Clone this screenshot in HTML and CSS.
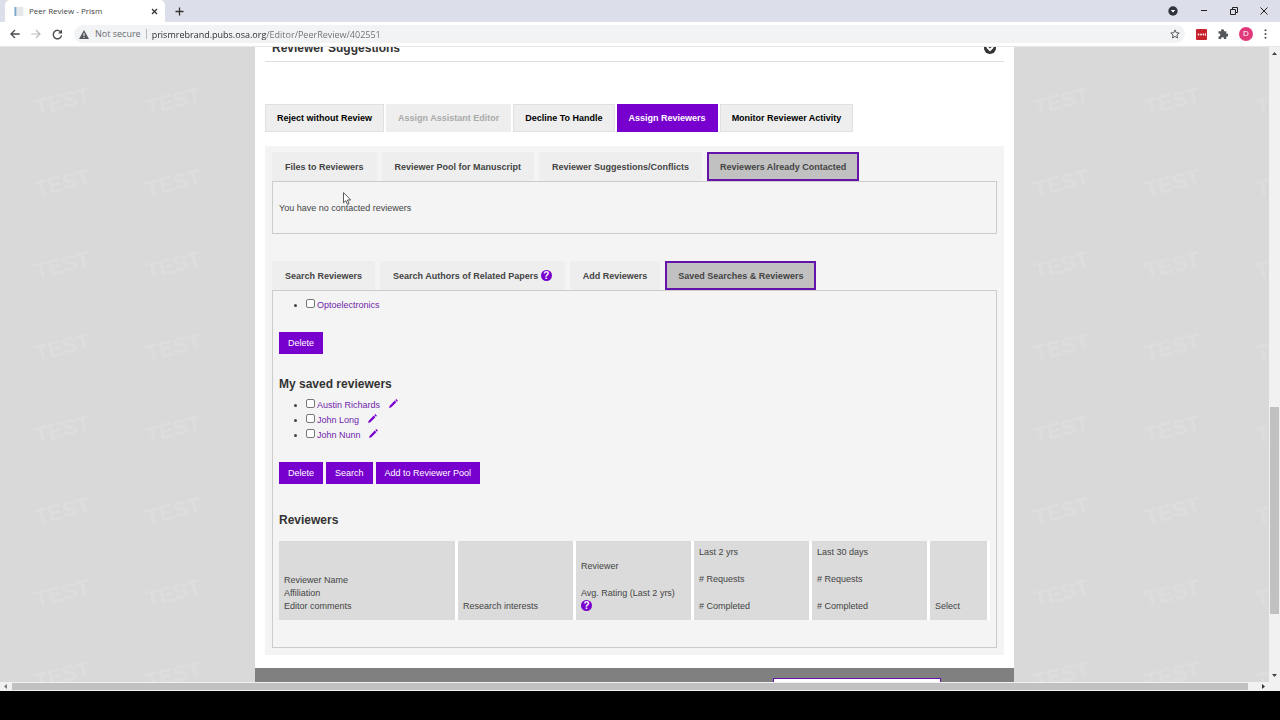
FILE: index.html
```html
<!DOCTYPE html>
<html lang="en">
<head>
    <meta charset="UTF-8">
    <meta name="viewport" content="width=device-width, initial-scale=1.0">
    <title>Peer Review - Prism</title>
    <link rel="stylesheet" href="styles.css">
</head>
<body>
    <div class="tab-strip">
        <div class="browser-tab">
            <svg class="favicon" viewBox="0 0 10 10"><rect width="10" height="10" fill="#e6e9ec"/><rect width="2" height="10" fill="#7ba7c9"/></svg>
            <span class="tab-title">Peer Review - Prism</span>
            <button type="button" class="icon-btn" aria-label="Close tab">
                <svg width="7" height="7" viewBox="0 0 7 7"><path d="M1 1l5 5M6 1L1 6" stroke="#333" stroke-width="1.3"/></svg>
            </button>
        </div>
        <button type="button" class="icon-btn new-tab" aria-label="New tab">
            <svg width="9" height="9" viewBox="0 0 9 9"><path d="M4.5 0.5v8M0.5 4.5h8" stroke="#333" stroke-width="1.3"/></svg>
        </button>
        <div class="window-buttons">
            <button type="button" class="icon-btn" aria-label="Tab search">
                <svg width="10" height="10" viewBox="0 0 10 10"><circle cx="5" cy="5" r="4.7" fill="#30343c"/><path d="M2.8 4h4.4L5 6.6z" fill="#fff"/></svg>
            </button>
            <button type="button" class="icon-btn" aria-label="Minimize">
                <svg width="8" height="8" viewBox="0 0 8 8"><path d="M1 3.5h6" stroke="#222"/></svg>
            </button>
            <button type="button" class="icon-btn" aria-label="Restore">
                <svg width="8" height="8" viewBox="0 0 8 8"><path d="M2.5 2.5v-2h5v5h-2M0.5 2.5h5v5h-5z" fill="none" stroke="#222"/></svg>
            </button>
            <button type="button" class="icon-btn" aria-label="Close">
                <svg width="8" height="8" viewBox="0 0 8 8"><path d="M0.5 0.5l7 7M7.5 0.5l-7 7" stroke="#222"/></svg>
            </button>
        </div>
    </div>

    <div class="toolbar">
        <button type="button" class="icon-btn" aria-label="Back">
            <svg width="10" height="10" viewBox="0 0 10 10"><path d="M9.7 5H1M5 1L1 5l4 4" fill="none" stroke="#4a4d51" stroke-width="1.3"/></svg>
        </button>
        <button type="button" class="icon-btn" aria-label="Forward">
            <svg width="10" height="10" viewBox="0 0 10 10"><path d="M0.3 5H9M5 1l4 4-4 4" fill="none" stroke="#b9bbbe" stroke-width="1.2"/></svg>
        </button>
        <button type="button" class="icon-btn" aria-label="Reload">
            <svg width="11" height="11" viewBox="0 0 11 11"><path d="M9 3.2A4.2 4.2 0 1 0 9.6 6.4" fill="none" stroke="#4a4d51" stroke-width="1.4"/><path d="M10 0.6v4H6z" fill="#4a4d51"/></svg>
        </button>
        <div class="omnibox">
            <svg width="10" height="9" viewBox="0 0 10 9"><path d="M5 0l5 9H0z" fill="#54575b"/><path d="M5 3v3M5 6.8v1.1" stroke="#fff"/></svg>
            <label for="address">Not secure</label>
            <input type="text" id="address" value="prismrebrand.pubs.osa.org/Editor/PeerReview/402551">
            <button type="button" class="icon-btn" aria-label="Bookmark this page">
                <svg width="10" height="10" viewBox="0 0 10 10"><path d="M5 0.9l1.2 2.8 3 .3-2.3 2 .7 3L5 7.4 2.4 9l.7-3L.8 4l3-.3z" fill="none" stroke="#4a4d51" stroke-width=".9"/></svg>
            </button>
        </div>
        <button type="button" class="icon-btn" aria-label="Password manager">
            <svg width="11" height="11" viewBox="0 0 11 11"><rect width="11" height="11" rx="1" fill="#c8232c"/><g fill="#fff"><circle cx="2.5" cy="5.5" r=".9"/><circle cx="5" cy="5.5" r=".9"/><circle cx="7.5" cy="5.5" r=".9"/><rect x="9" y="4" width=".7" height="3"/></g></svg>
        </button>
        <button type="button" class="icon-btn" aria-label="Extensions">
            <svg width="10" height="10" viewBox="0 0 10 10"><path d="M0.5 2.2h2.7a1.4 1.4 0 1 1 2.6 0h2.5v2.6a1.4 1.4 0 1 1 0 2.6V10H5.9a1.4 1.4 0 1 0-2.7 0H0.5V7.4a1.4 1.4 0 1 0 0-2.7z" fill="#54575b"/></svg>
        </button>
        <button type="button" class="avatar" aria-label="Profile">D</button>
        <button type="button" class="icon-btn" aria-label="Menu">
            <svg width="3" height="10" viewBox="0 0 3 10"><g fill="#4a4d51"><circle cx="1.5" cy="1.3" r="1"/><circle cx="1.5" cy="5" r="1"/><circle cx="1.5" cy="8.7" r="1"/></g></svg>
        </button>
    </div>

    <div class="viewport">
        <div class="page">
            <svg class="watermark" width="100%" height="100%" aria-hidden="true">
                <defs>
                    <pattern id="test" width="111" height="82" patternUnits="userSpaceOnUse">
                        <text x="37" y="68" transform="rotate(-14 37 68)">TEST</text>
                    </pattern>
                </defs>
                <rect width="100%" height="100%" fill="url(#test)"/>
            </svg>

            <main class="content">
                <div class="section-header">
                    <h2>Reviewer Suggestions</h2>
                    <svg width="12" height="12" viewBox="0 0 12 12"><circle cx="6" cy="6" r="6" fill="#333"/><path d="M3 5l3 3 3-3" fill="none" stroke="#fff" stroke-width="2"/></svg>
                </div>

                <div class="action-tabs">
                    <button type="button">Reject without Review</button>
                    <button type="button" disabled>Assign Assistant Editor</button>
                    <button type="button">Decline To Handle</button>
                    <button type="button" class="active">Assign Reviewers</button>
                    <button type="button">Monitor Reviewer Activity</button>
                </div>

                <div class="panel">
                    <div class="sub-tabs">
                        <button type="button">Files to Reviewers</button>
                        <button type="button">Reviewer Pool for Manuscript</button>
                        <button type="button">Reviewer Suggestions/Conflicts</button>
                        <button type="button" class="active">Reviewers Already Contacted</button>
                    </div>
                    <div class="tab-body contacted">
                        <p>You have no contacted reviewers</p>
                    </div>

                    <div class="sub-tabs">
                        <button type="button">Search Reviewers</button>
                        <button type="button">Search Authors of Related Papers <span class="help">?</span></button>
                        <button type="button">Add Reviewers</button>
                        <button type="button" class="active">Saved Searches &amp; Reviewers</button>
                    </div>
                    <div class="tab-body saved">
                        <ul class="saved-list">
                            <li><input type="checkbox" id="s1" aria-label="Optoelectronics"><a href="#">Optoelectronics</a></li>
                        </ul>
                        <div class="buttons">
                            <button type="button">Delete</button>
                        </div>

                        <h3>My saved reviewers</h3>
                        <ul class="saved-list">
                            <li><input type="checkbox" id="r1" aria-label="Austin Richards"><a href="#">Austin Richards</a>
                                <a href="#" class="edit" aria-label="Edit Austin Richards"><svg viewBox="0 0 10 10"><path d="M0 10l.8-2.6 5.6-5.6 1.8 1.8-5.6 5.6zM7 1.2L8.1.1 9.9 1.9 8.8 3z"/></svg></a></li>
                            <li><input type="checkbox" id="r2" aria-label="John Long"><a href="#">John Long</a>
                                <a href="#" class="edit" aria-label="Edit John Long"><svg viewBox="0 0 10 10"><path d="M0 10l.8-2.6 5.6-5.6 1.8 1.8-5.6 5.6zM7 1.2L8.1.1 9.9 1.9 8.8 3z"/></svg></a></li>
                            <li><input type="checkbox" id="r3" aria-label="John Nunn"><a href="#">John Nunn</a>
                                <a href="#" class="edit" aria-label="Edit John Nunn"><svg viewBox="0 0 10 10"><path d="M0 10l.8-2.6 5.6-5.6 1.8 1.8-5.6 5.6zM7 1.2L8.1.1 9.9 1.9 8.8 3z"/></svg></a></li>
                        </ul>
                        <div class="buttons">
                            <button type="button">Delete</button>
                            <button type="button">Search</button>
                            <button type="button">Add to Reviewer Pool</button>
                        </div>

                        <h3 class="results-title">Reviewers</h3>
                        <table>
                            <colgroup>
                                <col class="col-name">
                                <col span="4" class="col-data">
                                <col class="col-select">
                            </colgroup>
                            <thead>
                                <tr>
                                    <th>Reviewer Name<br>Affiliation<br>Editor comments</th>
                                    <th>Research interests</th>
                                    <th><p>Reviewer</p>Avg. Rating (Last 2 yrs)<br><span class="help">?</span></th>
                                    <th><p>Last 2 yrs</p><p># Requests</p># Completed</th>
                                    <th><p>Last 30 days</p><p># Requests</p># Completed</th>
                                    <th>Select</th>
                                </tr>
                            </thead>
                        </table>
                    </div>
                </div>

                <footer>
                    <input type="text" aria-label="Search">
                </footer>
            </main>
        </div>
        <div class="scroll-y">
            <svg width="5" height="3" viewBox="0 0 5 3"><path d="M0 3L2.5 0 5 3z" fill="#444"/></svg>
            <div class="track"><div class="thumb"></div></div>
            <svg width="5" height="3" viewBox="0 0 5 3"><path d="M0 0h5L2.5 3z" fill="#444"/></svg>
        </div>
    </div>

    <div class="scroll-x">
        <svg width="3" height="5" viewBox="0 0 3 5"><path d="M3 0v5L0 2.5z" fill="#777"/></svg>
        <div class="thumb"></div>
        <svg width="3" height="5" viewBox="0 0 3 5"><path d="M0 0v5l3-2.5z" fill="#333"/></svg>
    </div>
    <div class="bottom-bar"></div>

    <svg class="cursor" width="9" height="13" viewBox="0 0 9 13"><path d="M.5.6v10.2l2.3-2.2 1.7 3.8 1.6-.7-1.7-3.7h3.3z" fill="#fff" stroke="#333" stroke-width=".8"/></svg>
</body>
</html>
```

FILE: styles.css
```css
* {
    box-sizing: border-box;
}
body {
    margin: 0;
    height: 100vh;
    display: flex;
    flex-direction: column;
    overflow: hidden;
    background-color: #fff;
    font-family: "Liberation Sans", Arial, sans-serif;
    font-size: 9px;
    color: #444;
}
button {
    font-family: inherit;
    font-size: 9px;
    border: none;
    cursor: pointer;
}
svg {
    flex: none;
}
.icon-btn {
    display: flex;
    padding: 0;
    background: none;
}

/* browser chrome */
.tab-strip {
    height: 22px;
    flex: none;
    display: flex;
    align-items: center;
    padding-left: 5px;
    background-color: #dcdfe9;
}
.browser-tab {
    width: 160px;
    height: 22px;
    display: flex;
    align-items: center;
    gap: 5px;
    padding: 0 7px 0 9px;
    background-color: #fff;
    border-radius: 5px 5px 0 0;
}
.favicon {
    width: 10px;
    height: 9px;
}
.tab-title {
    flex: 1;
    font-family: "Open Sans", sans-serif;
    font-size: 8px;
    line-height: 10px;
}
.new-tab {
    margin-left: 10px;
}
.window-buttons {
    margin-left: auto;
    display: flex;
    align-items: center;
    gap: 22px;
    padding-right: 12px;
}
.toolbar {
    height: 25px;
    flex: none;
    display: flex;
    align-items: center;
    gap: 11px;
    padding: 0 13px 0 10px;
    border-bottom: 1px solid #e6e6e6;
}
.omnibox {
    flex: 1;
    height: 18px;
    display: flex;
    align-items: center;
    padding: 0 5px;
    background-color: #f1f3f4;
    border-radius: 9px;
    font-family: "Open Sans", sans-serif;
    font-size: 9px;
}
.omnibox label {
    margin-left: 6px;
    padding-right: 5px;
    border-right: 1px solid #bbb;
    line-height: 10px;
    color: #6b6e72;
}
.omnibox input {
    flex: 1;
    border: none;
    padding: 0 0 0 5px;
    font-family: inherit;
    font-size: 9px;
    color: transparent;
    background: linear-gradient(to right, #26282b 119px, #6b6e72 119px);
    background-clip: text;
}
.avatar {
    width: 14px;
    height: 14px;
    padding: 0;
    border-radius: 50%;
    background-color: #e0397a;
    color: #fff;
    font-size: 8px;
    line-height: 14px;
}

/* page */
.viewport {
    flex: 1;
    min-height: 0;
    display: flex;
}
.page {
    flex: 1;
    position: relative;
    overflow: hidden;
    background-color: #d9d9d9;
}
.watermark {
    position: absolute;
    top: 0;
    left: 0;
}
.watermark text {
    font-size: 22px;
    font-weight: bold;
    fill: #dddddd;
}
.content {
    position: relative;
    max-width: 759px;
    margin: -7px auto 0;
    background-color: #fff;
}
.section-header {
    display: flex;
    align-items: center;
    justify-content: space-between;
    height: 22px;
    margin: 0 10px 42px;
    padding: 0 8px 6px 7px;
    border-bottom: 1px solid #e2dcdf;
}
h2, h3 {
    margin: 0;
    font-size: 12px;
    line-height: 16px;
    color: #333;
}
.action-tabs {
    display: flex;
    gap: 2px;
    margin: 0 10px 14px;
}
.action-tabs button {
    height: 28px;
    padding: 0 11px;
    border: 1px solid #e0e0e0;
    background-color: #eee;
    font-weight: bold;
    color: #000;
}
.action-tabs button:disabled {
    border-color: #eee;
    color: #aaa;
}
.action-tabs .active {
    background-color: #7800ce;
    border-color: #7800ce;
    color: #fff;
}
.panel {
    margin: 0 10px;
    padding: 6px 7px 7px;
    background-color: #f4f4f4;
}
.sub-tabs {
    display: flex;
    gap: 5px;
}
.sub-tabs button {
    height: 29px;
    padding: 0 11px;
    border: 2px solid #eee;
    background-color: #eee;
    font-weight: bold;
    color: #444;
}
.sub-tabs .active {
    border-color: #6414a8;
    background-color: #c1c1c1;
}
.tab-body {
    border: 1px solid #ccc;
    padding: 0 6px;
}
.contacted {
    margin-bottom: 27px;
    padding: 20px 6px 18px;
}
.contacted p {
    margin: 0;
    line-height: 13px;
}
.saved {
    padding: 7px 6px 27px;
}
.saved-list {
    margin: 0 0 19px;
    padding: 0 0 0 27px;
    line-height: 15px;
}
.saved-list input {
    appearance: none;
    width: 9px;
    height: 9px;
    margin: 0 2px 0 0;
    border: 1px solid #777;
    border-radius: 2px;
    background-color: #fff;
}
a {
    color: #7024ac;
    text-decoration: none;
}
.edit {
    margin-left: 6px;
}
.edit svg {
    width: 9px;
    height: 9px;
    fill: #7800ce;
    vertical-align: baseline;
}
.buttons {
    display: flex;
    gap: 3px;
    margin-bottom: 22px;
}
.buttons button {
    height: 22px;
    padding: 0 9px;
    background-color: #7800ce;
    color: #fff;
}
.saved h3 {
    margin-bottom: 6px;
}
.saved .results-title {
    margin: 28px 0 13px;
}
.help {
    display: inline-block;
    width: 11px;
    height: 11px;
    border-radius: 50%;
    background-color: #7800ce;
    color: #fff;
    font-size: 10px;
    font-weight: bold;
    line-height: 11px;
    text-align: center;
}
table {
    width: 100%;
    table-layout: fixed;
    border-collapse: separate;
    border-spacing: 0;
}
.col-name {
    width: 179px;
}
.col-data {
    width: 118px;
}
.col-select {
    width: 60px;
}
th {
    height: 78px;
    padding: 5px 5px 7px;
    border-right: 3px solid #fff;
    background-color: #dbdbdb;
    font-weight: normal;
    line-height: 13px;
    text-align: left;
    vertical-align: bottom;
}
th p {
    margin: 0 0 14px;
}
footer {
    display: flex;
    justify-content: flex-end;
    height: 60px;
    margin-top: 13px;
    padding: 10px 73px 0 0;
    background-color: #808080;
}
footer input {
    width: 168px;
    height: 24px;
    border: 1px solid #6414a8;
    background-color: #fff;
}

/* scrollbars */
.scroll-y {
    width: 11px;
    display: flex;
    flex-direction: column;
    align-items: center;
    padding: 5px 0;
    background-color: #f1f1f1;
}
.track {
    flex: 1;
    display: flex;
    flex-direction: column;
    justify-content: flex-end;
    padding-bottom: 60px;
}
.thumb {
    background-color: #c1c1c1;
}
.track .thumb {
    width: 9px;
    height: 37%;
}
.scroll-x {
    height: 9px;
    flex: none;
    display: flex;
    align-items: center;
    padding: 0 15px 0 4px;
    background-color: #f1f1f1;
}
.scroll-x .thumb {
    flex: 1;
    height: 7px;
    margin: 0 14px 0 5px;
}
.bottom-bar {
    height: 29px;
    flex: none;
    background-color: #000;
}
.cursor {
    position: absolute;
    left: 343px;
    top: 192px;
}
```
